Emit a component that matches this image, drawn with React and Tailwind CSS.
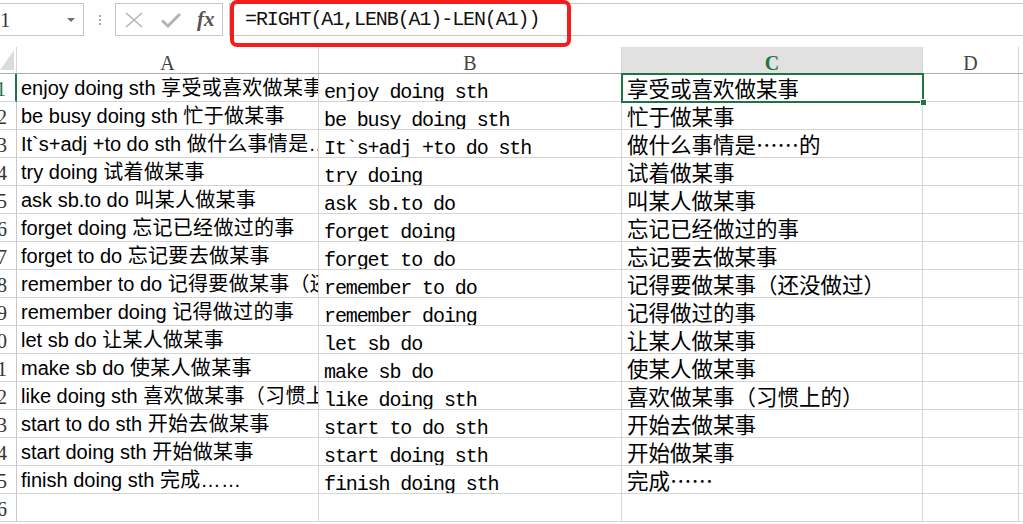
import React from "react";

const rows = [
  ["enjoy doing sth", "享受或喜欢做某事"],
  ["be busy doing sth", "忙于做某事"],
  ["It`s+adj +to do sth", "做什么事情是……的"],
  ["try doing", "试着做某事"],
  ["ask sb.to do", "叫某人做某事"],
  ["forget doing", "忘记已经做过的事"],
  ["forget to do", "忘记要去做某事"],
  ["remember to do", "记得要做某事（还没做过）"],
  ["remember doing", "记得做过的事"],
  ["let sb do", "让某人做某事"],
  ["make sb do", "使某人做某事"],
  ["like doing sth", "喜欢做某事（习惯上的）"],
  ["start to do sth", "开始去做某事"],
  ["start doing sth", "开始做某事"],
  ["finish doing sth", "完成……"],
  ["", ""],
];

const sans = "font-['Liberation_Sans','Noto_Sans_CJK_SC',sans-serif]";
const mono = "font-['Liberation_Mono','Noto_Sans_CJK_SC',monospace]";
const cjk = "font-['Noto_Sans_CJK_SC',sans-serif]";
const serif = "font-['Liberation_Serif',serif]";

export default function App() {
  return (
    <div className="relative w-[1023px] h-[524px] overflow-hidden bg-white text-black">
      {/* formula bar */}
      <div className="flex items-start pt-[3px] h-[47px]">
        <div className="relative w-[84px] h-[33px] border-y border-r border-[#c6c6c6] flex items-center overflow-hidden">
          <span className={`${serif} text-[20px] ml-[-13px] text-[#333]`}>C1</span>
          <div className="absolute left-[67px] top-[14px] w-0 h-0 border-l-[4px] border-r-[4px] border-t-[4px] border-l-transparent border-r-transparent border-t-[#707070]"></div>
        </div>
        <div className="w-[31px] h-[33px] flex flex-col items-center justify-center gap-[2px]">
          <div className="w-[2px] h-[2px] bg-[#a8a8a8]"></div>
          <div className="w-[2px] h-[2px] bg-[#a8a8a8]"></div>
          <div className="w-[2px] h-[2px] bg-[#a8a8a8]"></div>
        </div>
        <div className="w-[108px] h-[33px] border border-[#c6c6c6] flex items-center pl-[9px]">
          <svg width="18" height="16" viewBox="0 0 18 16" className="mr-[18px]">
            <path d="M1 1L17 15M17 1L1 15" stroke="#b4b4b4" strokeWidth="1.6" fill="none" />
          </svg>
          <svg width="20" height="16" viewBox="0 0 20 16" className="mr-[16px]">
            <path d="M1 8.5L7 14L19 2" stroke="#b4b4b4" strokeWidth="3" fill="none" />
          </svg>
          <span className={`${serif} italic font-bold text-[21px] text-[#555] leading-none`}>fx</span>
        </div>
        <div className="ml-[6px] flex-1 h-[33px] border-y border-l border-[#c6c6c6] flex items-center pl-[15px]">
          <span className={`${mono} text-[20px] tracking-[-1.1px] text-[#111]`}>
            =RIGHT(A1,LENB(A1)-LEN(A1))
          </span>
        </div>
      </div>

      {/* column headers */}
      <div className="flex h-[27px] border-b border-[#ababab]">
        <div className="relative w-[17px] shrink-0 border-r border-[#d4d4d4]">
          <svg width="15" height="21" viewBox="0 0 15 21" className="absolute left-0 top-[3px]">
            <polygon points="14,0 14,20 0,20" fill="#dcdcdc" />
          </svg>
        </div>
        {["A", "B", "C", "D"].map((c, i) => (
          <div
            key={c}
            className={`${serif} text-[20px] leading-none shrink-0 flex items-end justify-center border-r border-[#d4d4d4] ${
              ["w-[302px]", "w-[303px]", "w-[301px]", "w-[96px]"][i]
            } ${c === "C" ? "bg-[#e1e1e1] text-[#217346] font-bold" : "text-[#444]"}`}
          >
            {c}
          </div>
        ))}
        <div className="flex-1"></div>
      </div>

      {/* rows */}
      {rows.map((r, i) => (
        <div key={i} className="flex h-[28px]">
          <div
            className={`${serif} w-[17px] shrink-0 overflow-hidden flex items-end justify-end pr-[9px] text-[20px] leading-[24px] border-b border-[#d4d4d4] ${
              i === 0 ? "border-r-2 border-r-[#217346] text-[#217346]" : "border-r border-r-[#c8c8c8] text-[#333]"
            }`}
          >
            <span className="shrink-0">{i + 1}</span>
          </div>
          <div className={`${sans} w-[302px] shrink-0 overflow-hidden whitespace-nowrap flex items-end pl-[4px] pb-[1px] text-[20px] leading-[24px] border-r border-b border-[#d4d4d4]`}>
            {r[0] && (
              <span>
                {r[0]} <span className="tracking-[0.3px]">{r[1]}</span>
              </span>
            )}
          </div>
          <div className={`${mono} w-[303px] shrink-0 overflow-hidden whitespace-nowrap flex items-end pl-[5px] text-[20px] tracking-[-1.1px] leading-[17px] border-r border-b border-[#d4d4d4]`}>
            {r[0]}
          </div>
          <div className={`${cjk} w-[301px] shrink-0 overflow-hidden whitespace-nowrap flex items-end pl-[5px] text-[21.5px] leading-[26px] border-r border-b border-[#d4d4d4]`}>
            {r[1]}
          </div>
          <div className="w-[96px] shrink-0 border-r border-b border-[#d4d4d4]"></div>
          <div className="flex-1 border-b border-[#d4d4d4]"></div>
        </div>
      ))}

      {/* selection C1 */}
      <div className="absolute left-[621px] top-[73px] w-[303px] h-[30px] border-2 border-[#217346]"></div>
      <div className="absolute left-[920px] top-[99px] w-[7px] h-[7px] bg-[#217346] border border-white"></div>

      {/* red highlight */}
      <div className="absolute left-[230px] top-0 w-[341px] h-[47px] border-[4px] border-[#f71c1c] rounded-[7px]"></div>
    </div>
  );
}
